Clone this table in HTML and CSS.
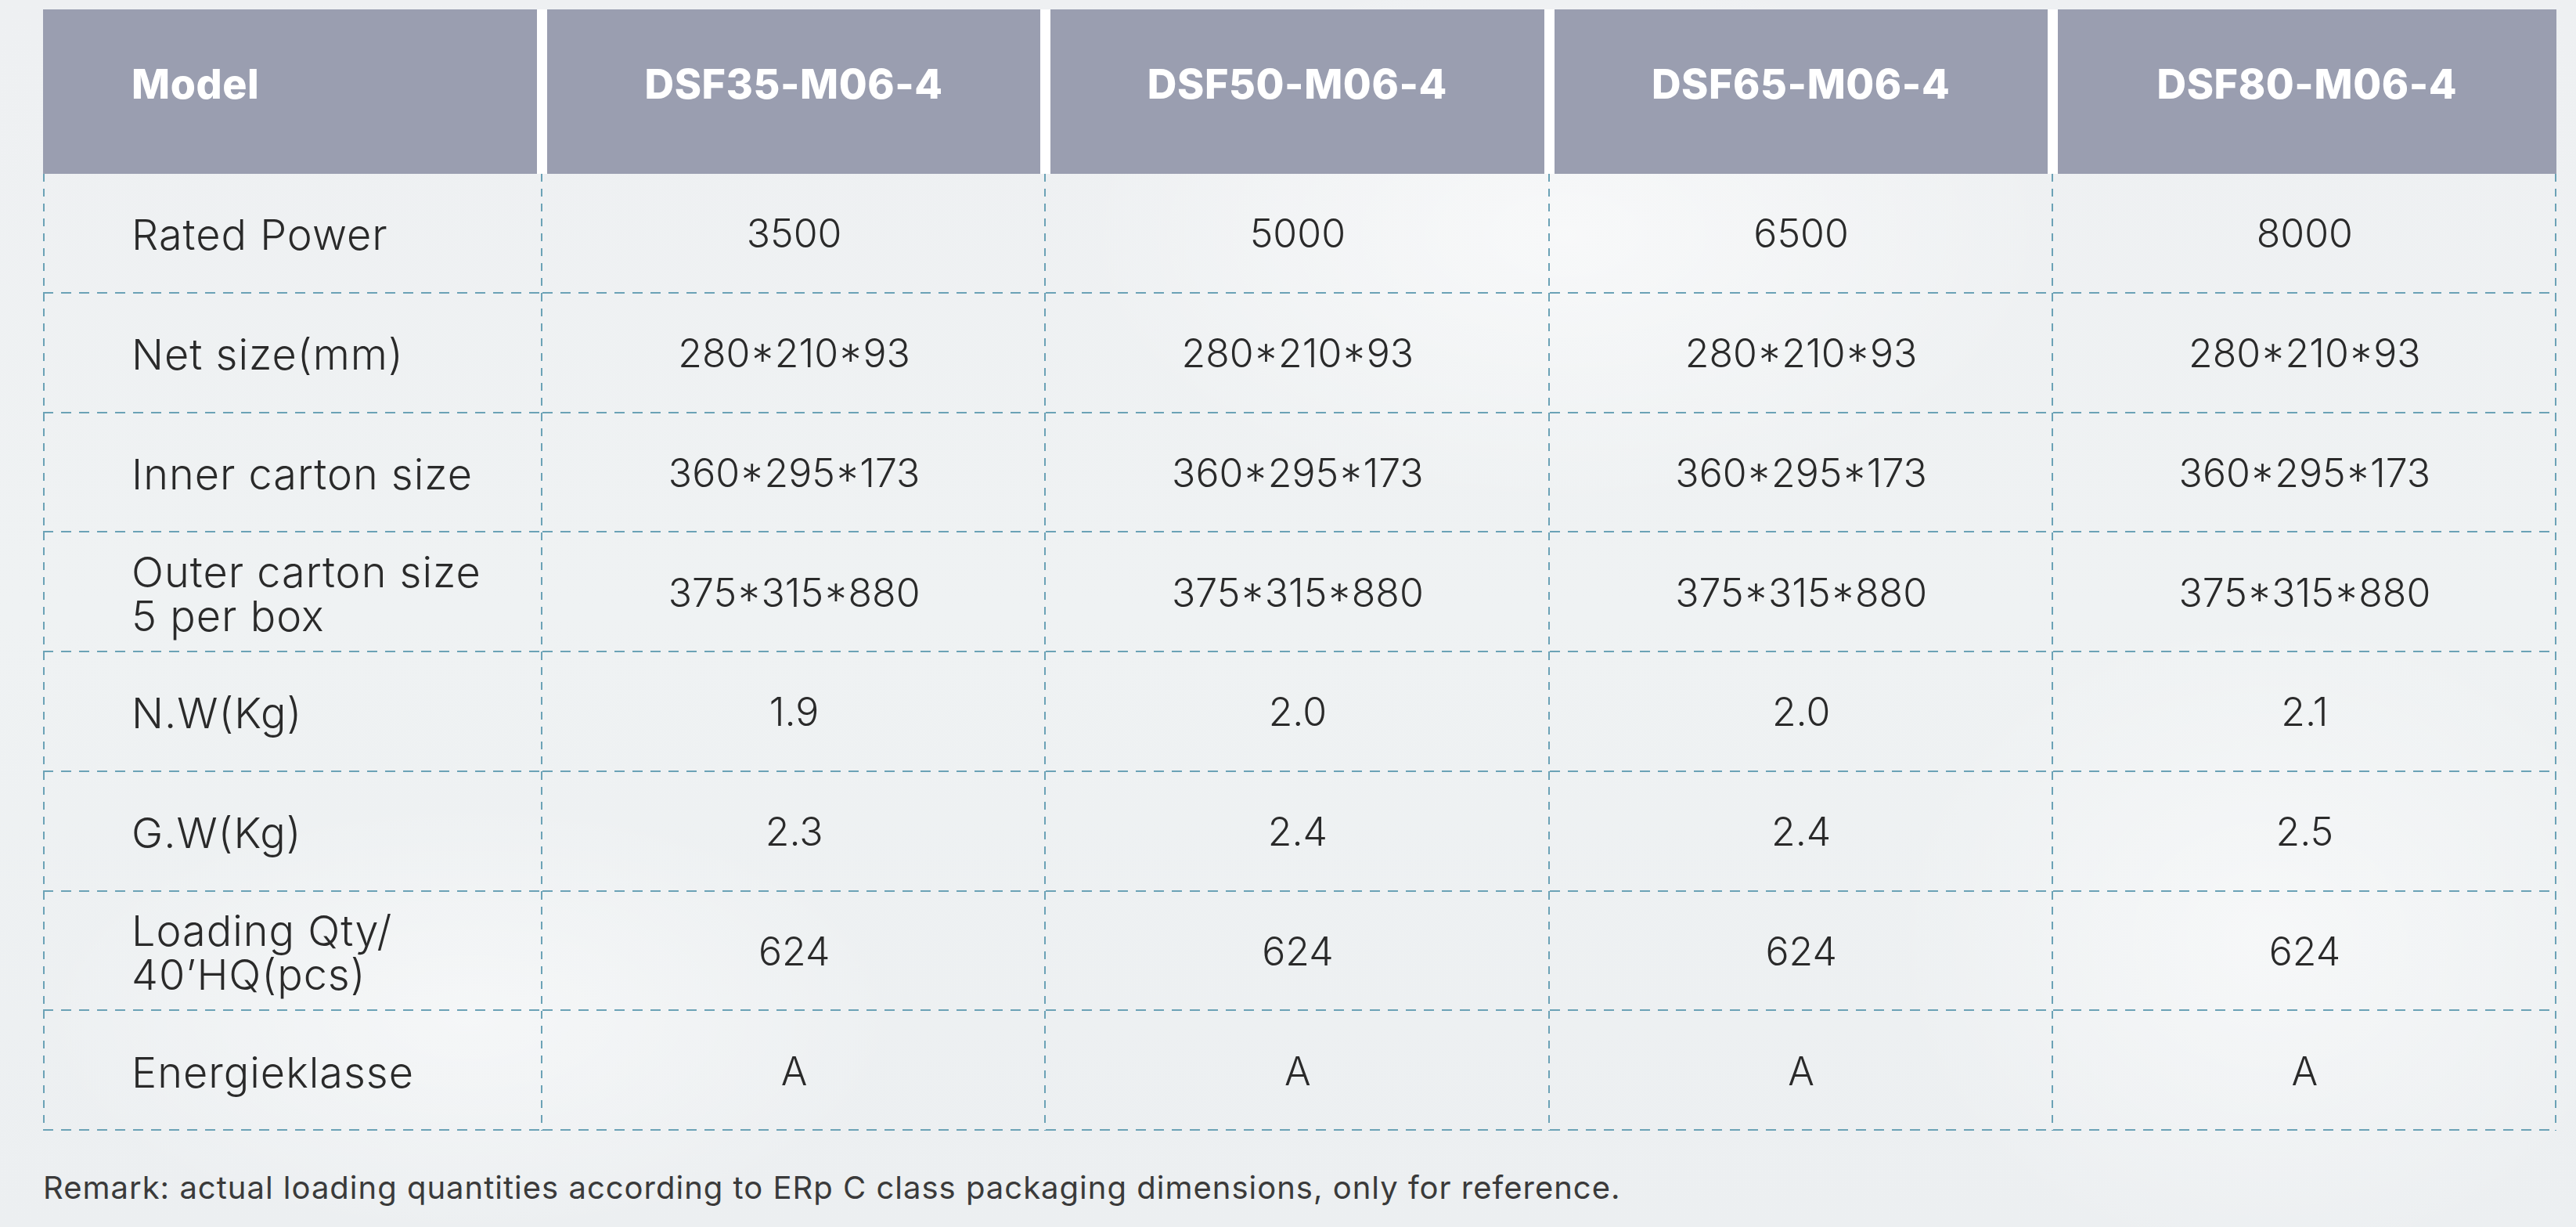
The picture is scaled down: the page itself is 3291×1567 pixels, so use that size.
FILE: index.html
```html
<!DOCTYPE html>
<html lang="en">
<head>
<meta charset="utf-8">
<title>DSF M06-4 specifications</title>
<link rel="stylesheet" href="styles.css">
</head>
<body>
<main class="page">
  <div class="spec">
    <div class="hd first">Model</div>
    <div class="hd">DSF35-M06-4</div>
    <div class="hd">DSF50-M06-4</div>
    <div class="hd">DSF65-M06-4</div>
    <div class="hd last">DSF80-M06-4</div>

    <div class="cell label">Rated Power</div>
    <div class="cell">3500</div>
    <div class="cell">5000</div>
    <div class="cell">6500</div>
    <div class="cell">8000</div>

    <div class="cell label">Net size(mm)</div>
    <div class="cell">280*210*93</div>
    <div class="cell">280*210*93</div>
    <div class="cell">280*210*93</div>
    <div class="cell">280*210*93</div>

    <div class="cell label">Inner carton size</div>
    <div class="cell">360*295*173</div>
    <div class="cell">360*295*173</div>
    <div class="cell">360*295*173</div>
    <div class="cell">360*295*173</div>

    <div class="cell label">Outer carton size<br>5 per box</div>
    <div class="cell">375*315*880</div>
    <div class="cell">375*315*880</div>
    <div class="cell">375*315*880</div>
    <div class="cell">375*315*880</div>

    <div class="cell label">N.W(Kg)</div>
    <div class="cell">1.9</div>
    <div class="cell">2.0</div>
    <div class="cell">2.0</div>
    <div class="cell">2.1</div>

    <div class="cell label">G.W(Kg)</div>
    <div class="cell">2.3</div>
    <div class="cell">2.4</div>
    <div class="cell">2.4</div>
    <div class="cell">2.5</div>

    <div class="cell label">Loading Qty/<br>40’HQ(pcs)</div>
    <div class="cell">624</div>
    <div class="cell">624</div>
    <div class="cell">624</div>
    <div class="cell">624</div>

    <div class="cell label">Energieklasse</div>
    <div class="cell">A</div>
    <div class="cell">A</div>
    <div class="cell">A</div>
    <div class="cell">A</div>
  </div>
  <p class="remark">Remark: actual loading quantities according to ERp C class packaging dimensions, only for reference.</p>
</main>
</body>
</html>
```

FILE: styles.css
```css
html, body {
  margin: 0;
  padding: 0;
}

body {
  width: 3291px;
  height: 1567px;
  overflow: hidden;
  font-family: "Inter", "Liberation Sans", sans-serif;
  color: #2a2a2a;
  background-color: #eef1f2;
  background-image:
    radial-gradient(ellipse 900px 500px at 2000px 300px, rgba(255,255,255,0.55), rgba(255,255,255,0) 70%),
    radial-gradient(ellipse 700px 600px at 2900px 1200px, rgba(255,255,255,0.5), rgba(255,255,255,0) 70%),
    radial-gradient(ellipse 800px 400px at 600px 1300px, rgba(255,255,255,0.45), rgba(255,255,255,0) 70%),
    linear-gradient(180deg, #eef0f2 0%, #eff2f3 50%, #eceff1 100%);
}

.page {
  padding: 12px 0 0 55px;
}

.spec {
  display: grid;
  width: 3211px;
  grid-template-columns: 638px repeat(4, 1fr);
  grid-template-rows: 210px repeat(8, 152.75px);
}

.hd {
  display: flex;
  align-items: center;
  justify-content: center;
  padding-bottom: 20px;
  box-sizing: border-box;
  background-color: #9a9eb0;
  background-clip: padding-box;
  border-left: 6px solid #ffffff;
  border-right: 7px solid #ffffff;
  color: #ffffff;
  font-weight: 800;
  font-size: 52px;
  letter-spacing: 0.6px;
}

.hd.first {
  border-left: 0;
  justify-content: flex-start;
  padding-left: 113px;
}

.hd.last {
  border-right: 0;
}

.cell {
  display: flex;
  align-items: center;
  justify-content: center;
  box-sizing: border-box;
  font-weight: 300;
  font-size: 50px;
  line-height: 56px;
  text-align: center;
  background-image:
    repeating-linear-gradient(90deg, #6ba2b6 0 13px, transparent 13px 23px),
    repeating-linear-gradient(180deg, #6ba2b6 0 10px, transparent 10px 19px);
  background-size: 100% 2px, 2px 100%;
  background-position: left bottom, right top;
  background-repeat: no-repeat;
}

.cell.label {
  justify-content: flex-start;
  text-align: left;
  padding-left: 113px;
  padding-top: 4px;
  font-size: 54px;
  line-height: 56px;
  letter-spacing: 1px;
  background-image:
    repeating-linear-gradient(90deg, #6ba2b6 0 13px, transparent 13px 23px),
    repeating-linear-gradient(180deg, #6ba2b6 0 10px, transparent 10px 19px),
    repeating-linear-gradient(180deg, #6ba2b6 0 10px, transparent 10px 19px);
  background-size: 100% 2px, 2px 100%, 2px 100%;
  background-position: left bottom, right top, left top;
}

.remark {
  margin: 50px 0 0 0;
  font-size: 40px;
  line-height: 46px;
  font-weight: 400;
  letter-spacing: 1px;
  color: #3a3a3a;
}
```
